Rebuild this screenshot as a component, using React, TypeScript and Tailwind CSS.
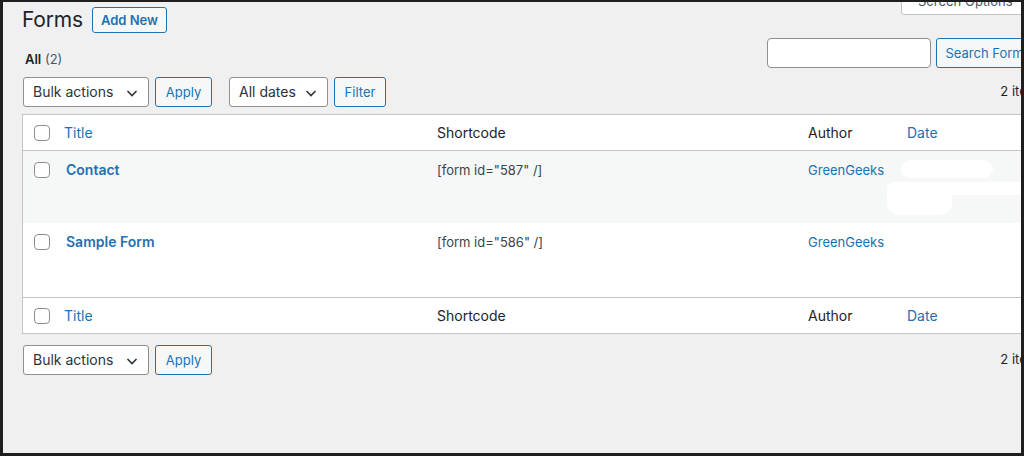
import React from 'react';

const cols = 'grid grid-cols-[31px_373px_371px_99px_142px]';

const Checkbox = () => (
	<span className="block w-4 h-4 rounded-[4px] border border-[#8c8f94] bg-white" />
);

const Chevron = () => (
	<svg width="20" height="20" viewBox="0 0 20 20" className="absolute right-[6px] top-[5px]">
		<path d="M5.5 8l4.5 4.5L14.5 8" fill="none" stroke="#2c3338" strokeWidth="1.6" />
	</svg>
);

const Select = ({ label, width }: { label: string; width: string }) => (
	<div className={`relative h-[30px] ${width} rounded-[3px] border border-[#8c8f94] bg-white pl-[9px] text-[14px] leading-[28px] text-[#2c3338]`}>
		{label}
		<Chevron />
	</div>
);

const Button = ({ label, width }: { label: string; width: string }) => (
	<div className={`h-[30px] ${width} rounded-[3px] border border-[#2271b1] bg-[#f6f7f7] text-center text-[13px] leading-[28px] text-[#2271b1]`}>
		{label}
	</div>
);

const HeadRow = ({ border }: { border: string }) => (
	<div className={`${cols} h-[36px] items-center text-[14px] bg-white ${border} border-[#c3c4c7]`}>
		<div className="pl-[11px]">
			<Checkbox />
		</div>
		<div className="px-[10px] text-[#2271b1]">Title</div>
		<div className="px-[10px] text-[#1d2327]">Shortcode</div>
		<div className="px-[10px] text-[#1d2327]">Author</div>
		<div className="px-[10px] text-[#2271b1]">Date</div>
	</div>
);

const forms = [
	{ title: 'Contact', id: '587', height: 'h-[72px]', bg: 'bg-[#f6f7f7]', redacted: true },
	{ title: 'Sample Form', id: '586', height: 'h-[74px]', bg: 'bg-white', redacted: false },
];

export default function App() {
	return (
		<div className="w-[1024px] h-[456px] bg-[#1e1e1e] pt-[2px] pl-[3px] pr-[3px] pb-[3px] font-['Inter',sans-serif]">
			<div className="relative h-full overflow-hidden bg-[#f0f0f1]">
				{/* screen options tab, cut off at the top */}
				<div className="absolute left-[898px] top-[-15px] h-[28px] w-[150px] rounded-b-[3px] border border-[#c3c4c7] bg-white pl-[16px] text-[13px] leading-[26px] text-[#50575e]">
					Screen Options
				</div>

				<div className="w-[1037px] pl-[19px] pt-[5px]">
					<div className="flex h-[26px] items-center gap-[9px]">
						<h1 className="text-[21px] leading-[26px] tracking-[-0.2px] text-[#1d2327]">Forms</h1>
						<div className="h-[26px] rounded-[3px] border border-[#2271b1] bg-[#f6f7f7] px-[8px] text-[13px] font-semibold leading-[24px] text-[#2271b1]">
							Add New
						</div>
					</div>

					<div className="mt-[5px] flex items-start">
						<div className="mt-[13px] pl-[3px] text-[13px] leading-[16px] text-[#50575e]">
							<span className="font-semibold text-[#1d2327]">All</span> (2)
						</div>
						<div className="ml-auto flex gap-[5px]">
							<div className="h-[30px] w-[164px] rounded-[4px] border border-[#8c8f94] bg-white" />
							<Button label="Search Forms" width="w-[104px]" />
						</div>
					</div>

					<div className="mt-[9px] ml-[1px] flex h-[30px] items-center">
						<div className="flex gap-[6px]">
							<Select label="Bulk actions" width="w-[126px]" />
							<Button label="Apply" width="w-[57px]" />
						</div>
						<div className="ml-[17px] flex gap-[6px]">
							<Select label="All dates" width="w-[99px]" />
							<Button label="Filter" width="w-[52px]" />
						</div>
						<div className="ml-auto mr-[-5px] text-[13px] text-[#1d2327]">2 items</div>
					</div>

					<div className="mt-[7px] border border-[#c3c4c7] bg-white">
						<HeadRow border="border-b" />
						{forms.map((f) => (
							<div key={f.id} className={`${cols} ${f.height} ${f.bg} items-start pt-[9px] text-[13px]`}>
								<div className="pl-[11px] pt-[2px]">
									<Checkbox />
								</div>
								<div className="px-[12px] text-[14px] font-semibold leading-[20px] text-[#2271b1]">{f.title}</div>
								<div className="px-[10px] leading-[20px] text-[#3c434a]">[form id="{f.id}" /]</div>
								<div className="px-[10px] leading-[20px] text-[#2271b1]">GreenGeeks</div>
								<div className="relative h-full">
									{f.redacted && (
										<>
											<div className="absolute left-[4px] top-[0px] h-[18px] w-[92px] rounded-full bg-white" />
											<div className="absolute left-[-10px] top-[22px] h-[13px] w-[160px] rounded-l-full bg-white" />
											<div className="absolute left-[-10px] top-[22px] h-[33px] w-[65px] rounded-[12px] bg-white" />
										</>
									)}
								</div>
							</div>
						))}
						<HeadRow border="border-t" />
					</div>

					<div className="mt-[11px] ml-[1px] flex h-[30px] items-center">
						<div className="flex gap-[6px]">
							<Select label="Bulk actions" width="w-[126px]" />
							<Button label="Apply" width="w-[57px]" />
						</div>
						<div className="ml-auto mr-[-5px] text-[13px] text-[#1d2327]">2 items</div>
					</div>
				</div>
			</div>
		</div>
	);
}
